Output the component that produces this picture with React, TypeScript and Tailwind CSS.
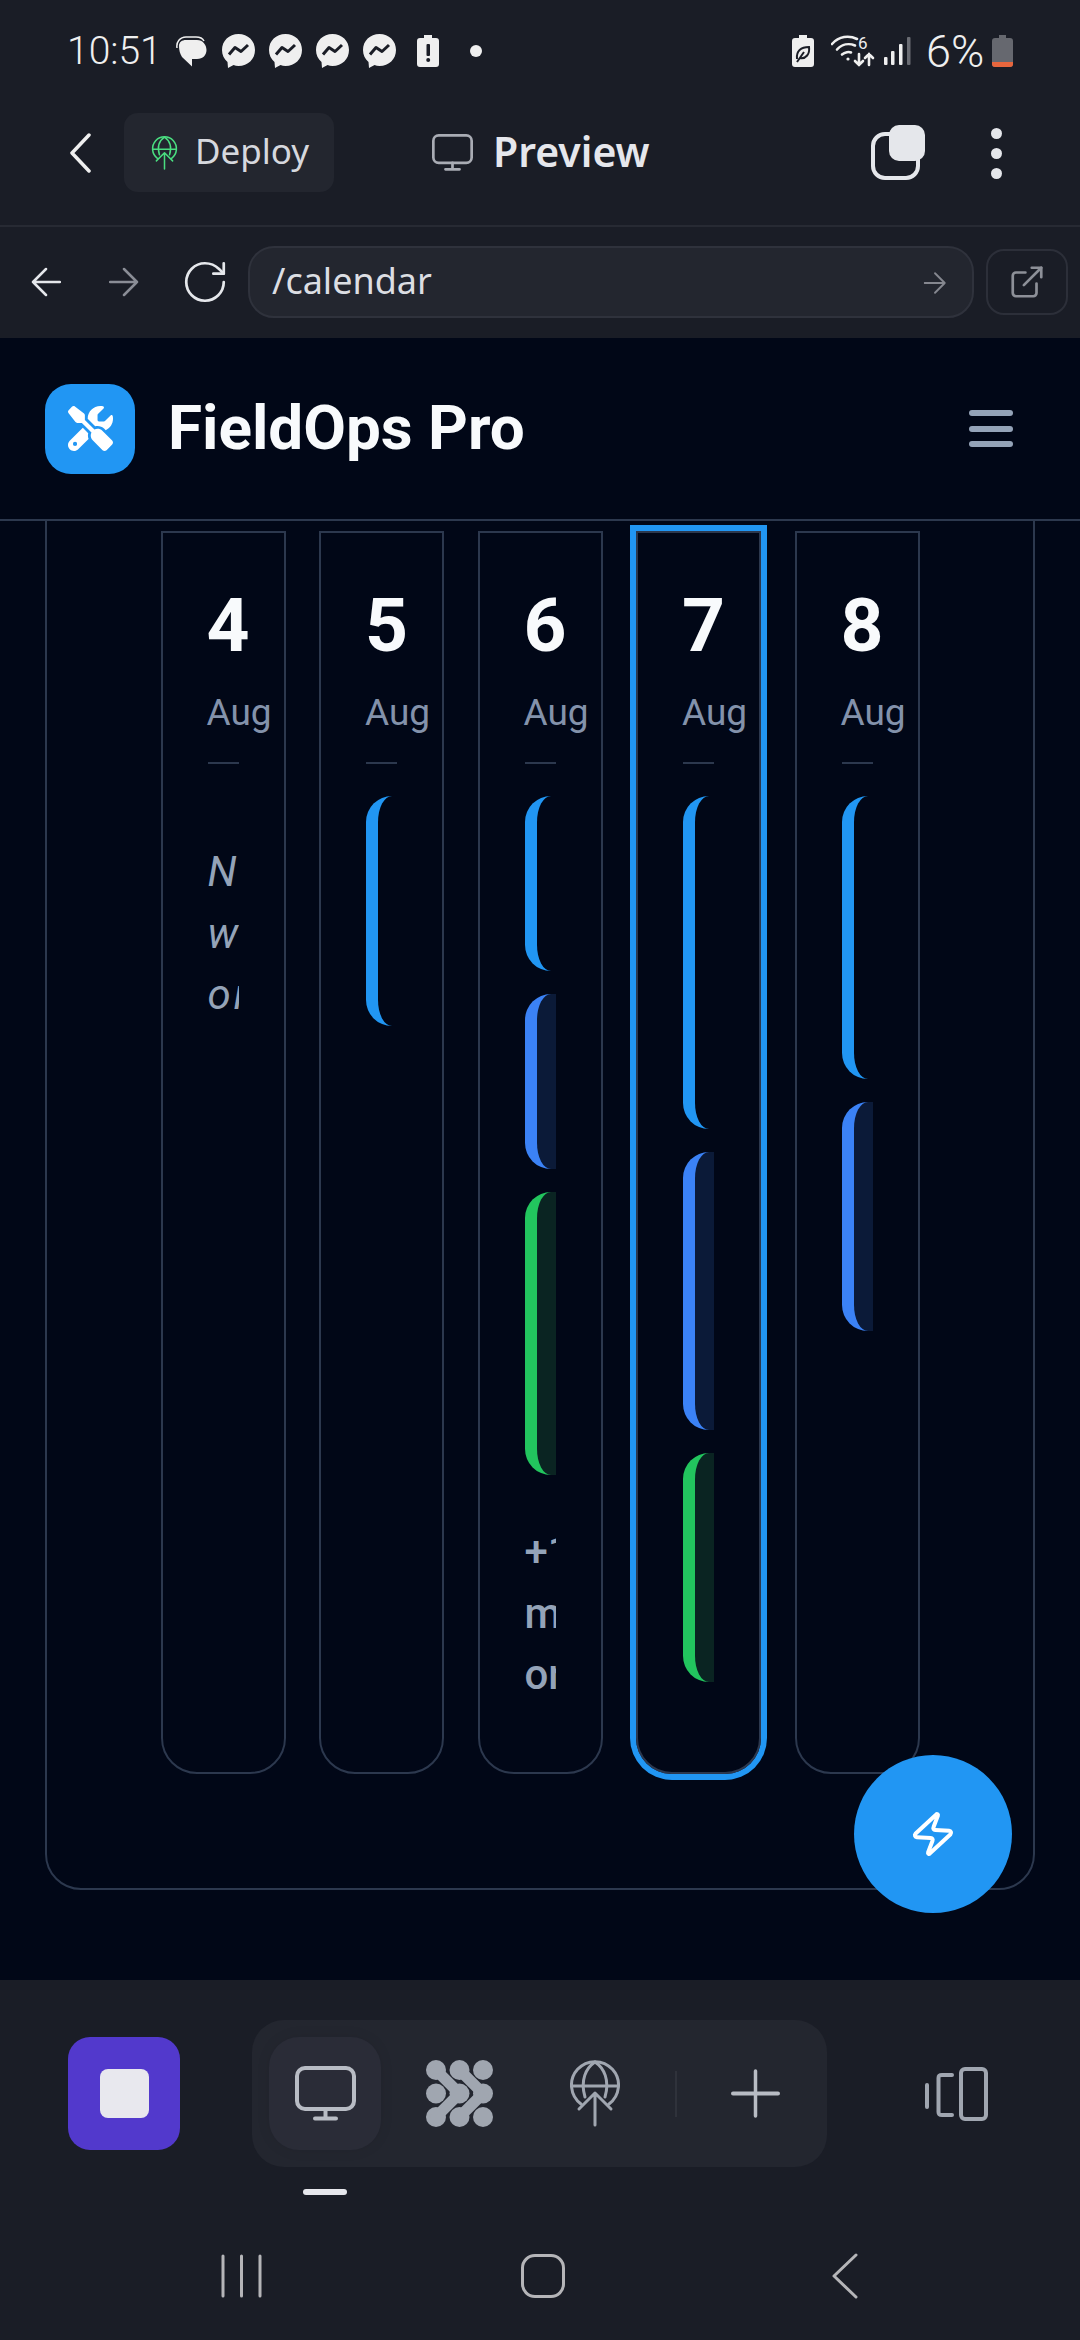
import React from "react";
import { ExternalLink, RotateCw, Zap } from "lucide-react";
import { FaScrewdriverWrench } from "react-icons/fa6";

function MonitorIcon({ w, h, color, sw = 4 }: { w: number; h: number; color: string; sw?: number }) {
  return (
    <svg width={w} height={h} viewBox="0 0 61 55" fill="none" stroke={color} strokeWidth={sw} strokeLinecap="round">
      <rect x="2" y="2" width="57" height="41" rx="8" />
      <path d="M30.5 43V52M20 52.5H41" />
    </svg>
  );
}

function GlobeUp({ w, h, color, sw = 3 }: { w: number; h: number; color: string; sw?: number }) {
  return (
    <svg width={w} height={h} viewBox="0 0 50 67" fill="none" stroke={color} strokeWidth={sw} strokeLinecap="round" strokeLinejoin="round">
      <path d="M11 44A23.5 23.5 0 1 1 39 44" />
      <path d="M2 26H48" />
      <path d="M15 37C10 20 16 8 25 2C34 8 40 20 35 37" />
      <path d="M25 65V33M9 49L25 33L41 49" />
    </svg>
  );
}

function Blob() {
  const c = "#a0a6b0";
  return (
    <svg width="67" height="67" viewBox="0 0 67 67" fill="none">
      {[10, 33.5, 57].map((y) =>
        [10, 33.5, 57].map((x) => <circle key={`${x}-${y}`} cx={x} cy={y} r="10" fill={c} />)
      )}
      <path d="M10 10L33.5 33.5L10 57" stroke={c} strokeWidth="11" strokeLinecap="round" strokeLinejoin="round" />
      <path d="M33.5 10L57 33.5L33.5 57" stroke={c} strokeWidth="11" strokeLinecap="round" strokeLinejoin="round" />
    </svg>
  );
}

function Messenger() {
  return (
    <svg width="33" height="34" viewBox="0 0 33 34">
      <path d="M16.5 0C7 0 0 6.8 0 16C0 21 2 25 5.5 28L6 34L11.5 31C13 31.6 14.700 32 16.500 32C26 32 33 25.200 33 16C33 6.800 26 0 16.500 0Z" fill="#efefef" />
      <path d="M7 20.500L13 13.500L19 17.500L26 11" fill="none" stroke="#1a1d26" strokeWidth="3" strokeLinejoin="round" />
    </svg>
  );
}

function Chat() {
  return (
    <svg width="31" height="31" viewBox="0 0 31 31">
      <path d="M1 12C0 6 4 1 10 1H20C24 1 27 3 28 5" fill="none" stroke="#efefef" strokeWidth="1.500" />
      <path d="M3 10C3 6 6 4 10 4H21C27 4 30.500 9 30.500 14C30.500 19 27 23 21 23H16V30.500L6 21C4 18 3 14 3 10Z" fill="#efefef" />
    </svg>
  );
}

function BatteryShell({ children }: { children?: React.ReactNode }) {
  return (
    <svg width="22" height="32" viewBox="0 0 22 32">
      <path d="M7 0H15V3H19C21 3 22 4 22 6V29C22 31 21 32 19 32H3C1 32 0 31 0 29V6C0 4 1 3 3 3H7Z" fill="#efefef" />
      {children}
    </svg>
  );
}

function Wifi() {
  return (
    <svg width="44" height="32" viewBox="0 0 44 32" fill="none" stroke="#efefef" strokeWidth="2.600" strokeLinecap="round">
      <path d="M1 9C8 1 18 0 26 4" />
      <path d="M6 14.500C11 9 18 8 24 10.500" />
      <path d="M11 19.500C14 17 18 16.500 20 17.500" />
      <circle cx="17" cy="24" r="1.600" fill="#efefef" stroke="none" />
      <path d="M28 19V30M24 26L28 30L32 26" />
      <path d="M38 30V19M34 23L38 19L42 23" />
      <text x="27" y="14" fontSize="17" fontFamily="Roboto, sans-serif" fill="#efefef" stroke="none">6</text>
    </svg>
  );
}

function Signal() {
  return (
    <svg width="27" height="28" viewBox="0 0 27 28">
      <rect x="0" y="20" width="3.500" height="8" rx="1" fill="#efefef" />
      <rect x="7" y="14" width="3.500" height="14" rx="1" fill="#efefef" />
      <rect x="15" y="7" width="3.500" height="21" rx="1" fill="#efefef" />
      <rect x="23" y="0" width="3.500" height="28" rx="1" fill="#6a6c73" />
    </svg>
  );
}

function StatusBar() {
  return (
    <div className="h-[102px] flex items-center pl-[67px] pr-[67px] text-[#efefef] font-['Roboto',sans-serif]">
      <span className="text-[39px] font-light leading-none w-[97px] whitespace-nowrap">10:51</span>
      <span className="ml-[12px] flex"><Chat /></span>
      <span className="ml-[15px] flex gap-[14px]"><Messenger /><Messenger /><Messenger /><Messenger /></span>
      <span className="ml-[21px] flex">
        <BatteryShell>
          <rect x="9.500" y="9" width="3.500" height="12" rx="1" fill="#1a1d26" />
          <circle cx="11.200" cy="25" r="2" fill="#1a1d26" />
        </BatteryShell>
      </span>
      <span className="ml-[31px] w-[12px] h-[12px] rounded-full bg-[#efefef]" />
      <div className="ml-auto flex items-center">
        <BatteryShell>
          <path d="M5 24C4 16 9 12 17 12C18 19 14 24 8 23M5 27L12 17" fill="none" stroke="#1a1d26" strokeWidth="2" />
        </BatteryShell>
        <span className="ml-[17px] flex"><Wifi /></span>
        <span className="ml-[9px] flex"><Signal /></span>
        <span className="ml-[15px] text-[45px] font-light leading-none w-[66px]">6%</span>
        <svg width="21" height="32" viewBox="0 0 21 32">
          <path d="M7 0H14V3H18C20 3 21 4 21 6V29C21 31 20 32 18 32H3C1 32 0 31 0 29V6C0 4 1 3 3 3H7Z" fill="#66686f" />
          <path d="M0 27H21V29C21 31 20 32 18 32H3C1 32 0 31 0 29Z" fill="#e8663d" />
        </svg>
      </div>
    </div>
  );
}

function Toolbar() {
  return (
    <div className="h-[123px] pt-[11px] flex items-start pl-[69px] font-['Noto_Sans',sans-serif]">
      <svg className="mt-[20px]" width="22" height="40" viewBox="0 0 22 40" fill="none" stroke="#efefef" strokeWidth="3.500" strokeLinecap="round" strokeLinejoin="round">
        <path d="M20 2L3 20L20 38" />
      </svg>
      <div className="ml-[33px] w-[210px] h-[79px] rounded-[14px] bg-[#23262f] flex items-center pl-[27px]">
        <GlobeUp w={27} h={34} color="#4ade80" sw={3} />
        <span className="ml-[17px] -mt-[4px] text-[35px] leading-none text-[#d6d8de]">Deploy</span>
      </div>
      <div className="ml-[98px] h-[79px] flex items-center">
        <MonitorIcon w={41} h={37} color="#a9acb4" sw={4} />
        <span className="ml-[20px] -mt-[2px] text-[41px] font-semibold leading-none text-[#e6e7ec]">Preview</span>
      </div>
      <div className="relative ml-[221px] mt-[12px] w-[54px] h-[56px]">
        <div className="absolute left-0 top-[7px] w-[49px] h-[48px] rounded-[14px] border-[4px] border-[#e5e7eb]" />
        <div className="absolute left-[18px] top-0 w-[36px] h-[36px] rounded-[10px] bg-[#e5e7eb]" />
      </div>
      <div className="ml-[66px] mt-[15px] flex flex-col gap-[9px]">
        <span className="w-[11px] h-[11px] rounded-full bg-[#e5e7eb]" />
        <span className="w-[11px] h-[11px] rounded-full bg-[#e5e7eb]" />
        <span className="w-[11px] h-[11px] rounded-full bg-[#e5e7eb]" />
      </div>
    </div>
  );
}

function Arrow({ color, flip }: { color: string; flip?: boolean }) {
  return (
    <svg className={flip ? "-scale-x-100" : ""} width="30" height="30" viewBox="0 0 30 30" fill="none" stroke={color} strokeWidth="2.500" strokeLinecap="round" strokeLinejoin="round">
      <path d="M29 15H2M15 2L2 15L15 28" />
    </svg>
  );
}

function BrowserBar() {
  return (
    <div className="h-[113px] border-t-[2px] border-[#272a33] flex items-center pl-[31px] pr-[12px] pb-[2px] font-['Noto_Sans',sans-serif]">
      <Arrow color="#e5e7eb" />
      <span className="ml-[48px] flex"><Arrow color="#8a8d96" flip /></span>
      <RotateCw className="ml-[41px]" size={50} color="#e5e7eb" strokeWidth={1.300} />
      <div className="ml-[18px] w-[726px] h-[72px] rounded-[26px] bg-[#23262f] border-[2px] border-[#2f323c] flex items-center pl-[22px] pr-[22px]">
        <span className="-mt-[2px] text-[36px] leading-none text-[#dcdee3]">/calendar</span>
        <span className="ml-auto mt-[2px] flex scale-75"><Arrow color="#85878f" flip /></span>
      </div>
      <div className="ml-[12px] w-[82px] h-[66px] rounded-[18px] border-[2px] border-[#2c2f39] flex items-center justify-center">
        <ExternalLink size={38} color="#8d9098" strokeWidth={1.700} />
      </div>
    </div>
  );
}

function AppHeader() {
  return (
    <div className="h-[183px] border-b-[2px] border-[#2c384e] bg-[#010717] flex items-center pl-[45px] pr-[67px] shrink-0 font-['Roboto',sans-serif]">
      <div className="w-[90px] h-[90px] rounded-[26px] bg-[#2196f3] flex items-center justify-center">
        <FaScrewdriverWrench size={45} color="#ffffff" />
      </div>
      <span className="ml-[33px] -mt-[2px] text-[62px] leading-none font-bold text-[#f8fafc]">FieldOps Pro</span>
      <div className="ml-auto flex flex-col gap-[9.500px]">
        <span className="w-[44px] h-[6px] rounded-full bg-[#94a3b8]" />
        <span className="w-[44px] h-[6px] rounded-full bg-[#94a3b8]" />
        <span className="w-[44px] h-[6px] rounded-full bg-[#94a3b8]" />
      </div>
    </div>
  );
}

type Kind = "sky" | "blue" | "green";

function Event({ kind, h }: { kind: Kind; h: number }) {
  const cls =
    kind === "sky"
      ? "border-[#2196f3] bg-transparent"
      : kind === "blue"
      ? "border-[#3b82f6] bg-[#0b1a38]"
      : "border-[#22c55e] bg-[#0a2422]";
  return <div className={`w-[200px] shrink-0 rounded-[26px] border-l-[12px] ${cls}`} style={{ height: h }} />;
}

function Day({
  n,
  events,
  selected,
  note,
  more,
}: {
  n: number;
  events: [Kind, number][];
  selected?: boolean;
  note?: string;
  more?: string;
}) {
  return (
    <div
      className={`w-[125px] h-[1243px] shrink-0 rounded-b-[36px] border-[2px] border-[#2c384e] px-[45px] pt-[44px] ${
        selected ? "ring-[6px] ring-[#2196f3]" : ""
      }`}
    >
      <div className="-ml-[1px] text-[75px] leading-[96px] font-bold text-[#f8fafc]">{n}</div>
      <div className="-ml-[1px] mt-[16px] text-[37px] leading-[48px] text-[#8392ab] whitespace-nowrap">Aug</div>
      <div className="mt-[25px] h-[2px] bg-[#2c384e]" />
      <div className="mt-[32px] flex flex-col gap-[23px] overflow-hidden">
        {events.map(([k, h], i) => (
          <Event key={i} kind={k} h={h} />
        ))}
        {note && <div className="mt-[45px] text-[42px] tracking-[3px] leading-[61.500px] italic text-[#94a3b8]">{note}</div>}
        {more && <div className="mt-[23px] text-[42px] leading-[61.500px] font-medium text-[#94a3b8]">{more}</div>}
      </div>
    </div>
  );
}

function Calendar() {
  return (
    <div className="relative flex-1 bg-[#010717] overflow-hidden px-[45px] font-['Roboto',sans-serif]">
      <div className="-mt-[20px] pt-[28px] pb-[114px] rounded-b-[36px] border-[2px] border-[#2c384e] flex justify-center gap-[33.500px]">
        <Day n={4} events={[]} note="No work orders" />
        <Day n={5} events={[["sky", 230]]} />
        <Day n={6} events={[["sky", 175], ["blue", 175], ["green", 283]]} more="+1 more orders" />
        <Day n={7} selected events={[["sky", 333], ["blue", 278], ["green", 229]]} />
        <Day n={8} events={[["sky", 283], ["blue", 229]]} />
      </div>
      <button className="absolute right-[68px] bottom-[67px] w-[158px] h-[158px] rounded-full bg-[#2196f3] flex items-center justify-center">
        <Zap className="rotate-3" size={48} color="#ffffff" strokeWidth={2} />
      </button>
    </div>
  );
}

function BottomBar() {
  return (
    <div className="h-[360px] shrink-0 bg-[#1a1d26] font-['Noto_Sans',sans-serif]">
      <div className="pt-[40px] pl-[68px] flex items-center h-[187px]">
        <div className="w-[112px] h-[113px] rounded-[22px] bg-[#5239cc] flex items-center justify-center">
          <span className="w-[49px] h-[49px] rounded-[8px] bg-[#e8e8ee]" />
        </div>
        <div className="ml-[72px] w-[575px] h-[147px] rounded-[32px] bg-[#23262f] flex items-center pl-[17px]">
          <div className="w-[112px] h-[113px] rounded-[30px] bg-[#2a2c37] shadow-[0_0_14px_rgba(0,0,0,0.08)] flex items-center justify-center">
            <MonitorIcon w={61} h={55} color="#b8bcc4" sw={4} />
          </div>
          <span className="ml-[45px] flex"><Blob /></span>
          <span className="ml-[77px] flex"><GlobeUp w={50} h={67} color="#a0a6b0" /></span>
          <span className="ml-[55px] w-[2px] h-[46px] bg-[#2f323b]" />
          <svg className="ml-[54px]" width="49" height="49" viewBox="0 0 49 49" fill="none" stroke="#b8bcc4" strokeLinecap="round">
            <path d="M2 24.500H47" strokeWidth="4" />
            <path d="M24.500 2V47" strokeWidth="3.500" />
          </svg>
        </div>
        <svg className="ml-[98px]" width="63" height="54" viewBox="0 0 63 54" fill="none" stroke="#a0a6b0" strokeWidth="4" strokeLinecap="round" strokeLinejoin="round">
          <path d="M2 18V40" />
          <path d="M27 8H17C14 8 13.500 9 13.500 11V45C13.500 47 14 48 17 48H27" />
          <rect x="36" y="2" width="25" height="50" rx="4" />
        </svg>
      </div>
      <div className="mt-[22px] ml-[303px] w-[44px] h-[6px] rounded-full bg-[#e6e7ec]" />
      <div className="mt-[58px] h-[46px] flex items-center pl-[221px]">
        <svg width="42" height="44" viewBox="0 0 42 44" fill="none" stroke="#b5b5b8" strokeWidth="3" strokeLinecap="round">
          <path d="M2 2V42M20.500 2V42M39 2V42" />
        </svg>
        <div className="ml-[258px] w-[44px] h-[44px] rounded-[14px] border-[3px] border-[#b5b5b8]" />
        <svg className="ml-[267px]" width="26" height="46" viewBox="0 0 26 46" fill="none" stroke="#b5b5b8" strokeWidth="3" strokeLinecap="round" strokeLinejoin="round">
          <path d="M24 2L2 23L24 44" />
        </svg>
      </div>
    </div>
  );
}

export default function App() {
  return (
    <div className="w-[1080px] h-[2340px] flex flex-col overflow-hidden bg-[#1a1d26]">
      <StatusBar />
      <Toolbar />
      <BrowserBar />
      <AppHeader />
      <Calendar />
      <BottomBar />
    </div>
  );
}
